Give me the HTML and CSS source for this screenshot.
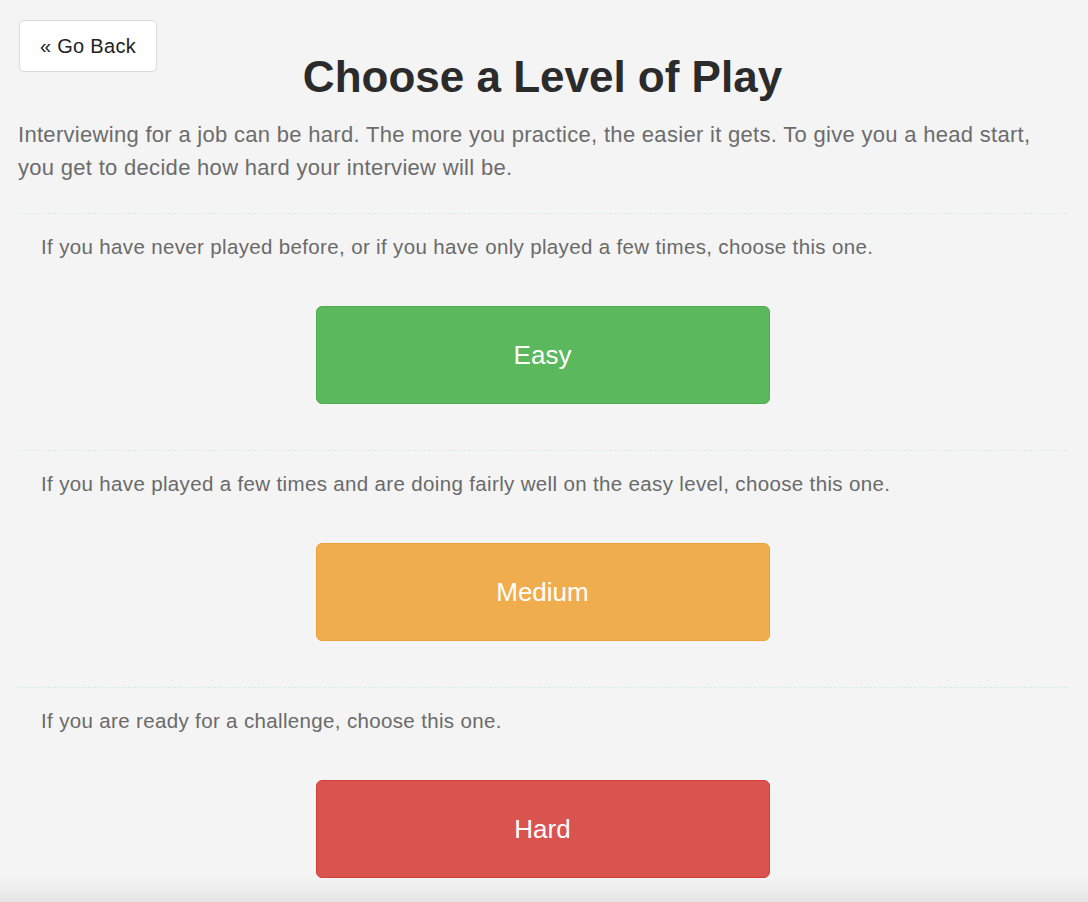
FILE: index.html
```html
<!DOCTYPE html>
<html lang="en">
<head>
    <meta charset="UTF-8">
    <title>Choose a Level of Play</title>
    <link rel="stylesheet" href="styles.css">
</head>
<body>
    <div class="level-page">
        <div class="page-header">
            <button class="btn back-btn">&laquo; Go Back</button>
            <h1 class="page-title">Choose a Level of Play</h1>
        </div>
        <p class="intro">Interviewing for a job can be hard. The more you practice, the easier it gets. To give you a head start, you get to decide how hard your interview will be.</p>

        <div class="level">
            <p class="level-hint">If you have never played before, or if you have only played a few times, choose this one.</p>
            <button class="btn level-btn easy-btn">Easy</button>
        </div>
        <div class="level">
            <p class="level-hint">If you have played a few times and are doing fairly well on the easy level, choose this one.</p>
            <button class="btn level-btn medium-btn">Medium</button>
        </div>
        <div class="level">
            <p class="level-hint">If you are ready for a challenge, choose this one.</p>
            <button class="btn level-btn hard-btn">Hard</button>
        </div>
    </div>
    <div class="page-fade"></div>
</body>
</html>
```

FILE: styles.css
```css
* {
    margin: 0;
    padding: 0;
    box-sizing: border-box;
}
body {
    font-family: 'Liberation Sans', Arial, sans-serif;
    background: #f4f4f4;
    color: #333;
}
.level-page {
    padding: 20px 21px 40px 18px;
}
.page-header {
    display: grid;
    grid-template-columns: 1fr auto 1fr;
    align-items: start;
}
.btn {
    font-family: inherit;
    cursor: pointer;
    border: 1px solid transparent;
}
.back-btn {
    justify-self: start;
    width: 138px;
    height: 52px;
    margin-left: 1px;
    background: #fff;
    border-color: #d9d9d9;
    border-radius: 5px;
    font-size: 20px;
    letter-spacing: 0.3px;
    color: #222;
}
.page-title {
    font-size: 44px;
    font-weight: bold;
    line-height: 48px;
    color: #2b2b2b;
    margin-top: 33px;
    text-align: center;
}
.intro {
    font-size: 22px;
    line-height: 33px;
    font-weight: 300;
    letter-spacing: 0.3px;
    color: #6c6c6c;
    margin-top: 17px;
    padding-bottom: 29px;
}
.level {
    border-top: 1px dashed #d3efe2;
    padding: 21px 0 46px;
    display: flex;
    flex-direction: column;
    align-items: center;
}
.level-hint {
    align-self: stretch;
    padding-left: 23px;
    font-size: 20.5px;
    letter-spacing: 0.35px;
    line-height: 24px;
    color: #6a6a6a;
}
.level-btn {
    margin-top: 47px;
    width: 454px;
    height: 98px;
    border-radius: 6px;
    font-size: 26px;
    color: #fff;
}
.easy-btn {
    background: #5cb85c;
    border-color: #4cae4c;
}
.medium-btn {
    background: #f0ad4e;
    border-color: #eea236;
}
.hard-btn {
    background: #d9534f;
    border-color: #d43f3a;
}
.page-fade {
    position: fixed;
    left: 0;
    right: 0;
    bottom: 0;
    height: 26px;
    background: linear-gradient(rgba(0,0,0,0), rgba(0,0,0,0.06));
    pointer-events: none;
}
```
